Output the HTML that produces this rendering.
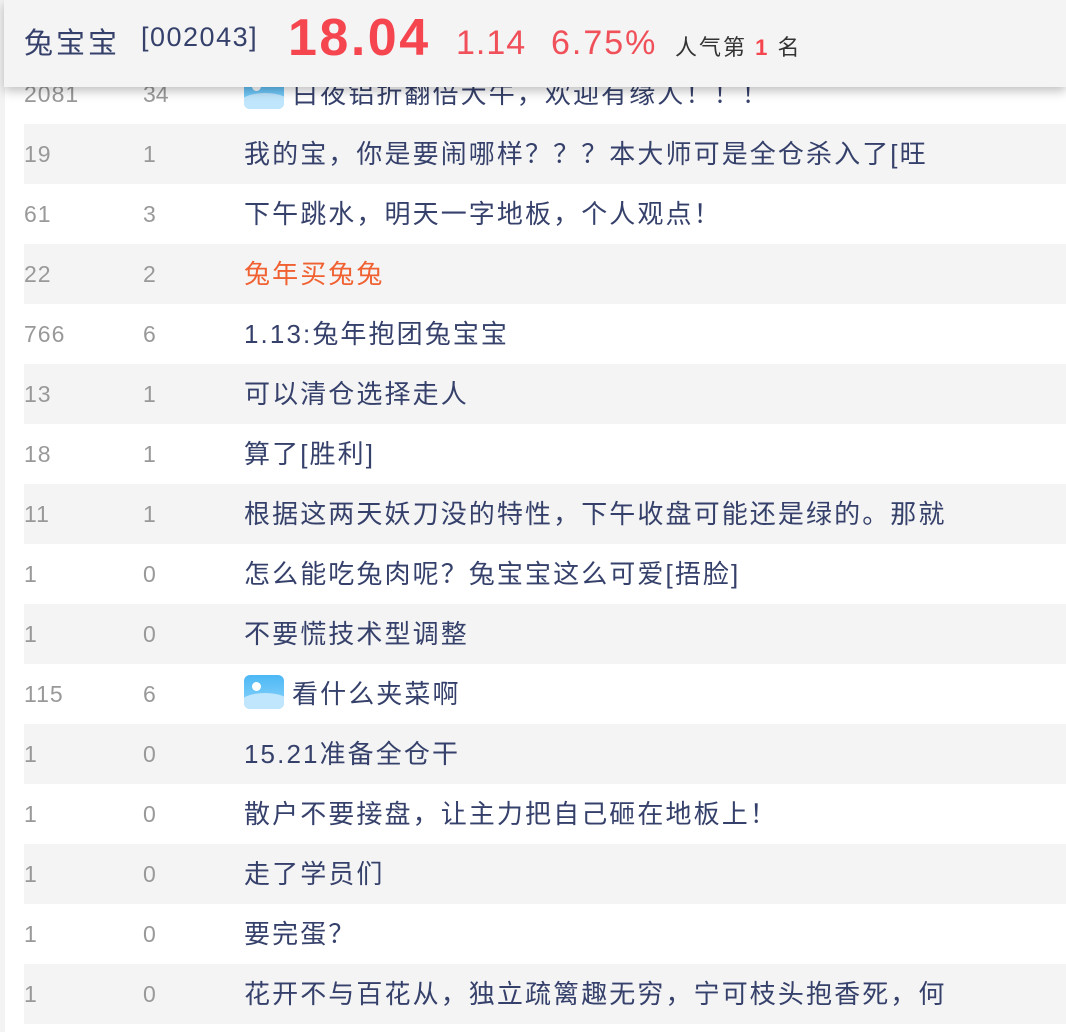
<!DOCTYPE html>
<html><head><meta charset="utf-8"><style>
*{margin:0;padding:0;box-sizing:border-box}
html,body{width:1066px;height:1032px;overflow:hidden;background:#fff}
body{position:relative;font-family:"Liberation Sans","Noto Sans CJK SC",sans-serif}
.edge{position:absolute;left:0;top:0;width:5px;height:1032px;background:#f3f3f3}
.list{position:absolute;left:24px;top:64px;right:0}
.row{height:60px;position:relative;background:#fff}
.row.g{background:#f4f4f4}
.row span{position:absolute;top:0;line-height:60px}
.a{left:0;font-size:23px;color:#999;letter-spacing:1px}
.b{left:119px;font-size:23px;color:#999}
.t{left:220px;font-size:26px;color:#36416b;white-space:nowrap;letter-spacing:2.1px}
.t.o{color:#f06030}
.ic{display:inline-block;width:40px;height:34px;border-radius:6px;vertical-align:-6px;margin-right:8px;overflow:hidden;position:relative;background:linear-gradient(#4cb8f5,#8fd4fb)}
.ic:before{content:"";position:absolute;left:8px;top:7px;width:9px;height:9px;border-radius:50%;background:#fff}
.ic:after{content:"";position:absolute;left:-6px;top:18px;width:54px;height:24px;border-radius:50% 50% 0 0;background:#bfe6fd}
.hdr{position:absolute;left:4px;top:0;right:0;height:87px;background:#f4f4f4;box-shadow:0 4px 10px rgba(0,0,0,.25);z-index:2}
.hdr span{position:absolute;white-space:nowrap}
</style></head><body>
<div class="edge"></div>
<div class="list">
<div class="row"><span class="a">2081</span><span class="b">34</span><span class="t"><i class="ic"></i>白夜铝折翻倍大牛，欢迎有缘人！！！</span></div>
<div class="row g"><span class="a">19</span><span class="b">1</span><span class="t">我的宝，你是要闹哪样？？？本大师可是全仓杀入了[旺</span></div>
<div class="row"><span class="a">61</span><span class="b">3</span><span class="t">下午跳水，明天一字地板，个人观点！</span></div>
<div class="row g"><span class="a">22</span><span class="b">2</span><span class="t o">兔年买兔兔</span></div>
<div class="row"><span class="a">766</span><span class="b">6</span><span class="t">1.13:兔年抱团兔宝宝</span></div>
<div class="row g"><span class="a">13</span><span class="b">1</span><span class="t">可以清仓选择走人</span></div>
<div class="row"><span class="a">18</span><span class="b">1</span><span class="t">算了[胜利]</span></div>
<div class="row g"><span class="a">11</span><span class="b">1</span><span class="t">根据这两天妖刀没的特性，下午收盘可能还是绿的。那就</span></div>
<div class="row"><span class="a">1</span><span class="b">0</span><span class="t">怎么能吃兔肉呢？兔宝宝这么可爱[捂脸]</span></div>
<div class="row g"><span class="a">1</span><span class="b">0</span><span class="t">不要慌技术型调整</span></div>
<div class="row"><span class="a">115</span><span class="b">6</span><span class="t"><i class="ic"></i>看什么夹菜啊</span></div>
<div class="row g"><span class="a">1</span><span class="b">0</span><span class="t">15.21准备全仓干</span></div>
<div class="row"><span class="a">1</span><span class="b">0</span><span class="t">散户不要接盘，让主力把自己砸在地板上！</span></div>
<div class="row g"><span class="a">1</span><span class="b">0</span><span class="t">走了学员们</span></div>
<div class="row"><span class="a">1</span><span class="b">0</span><span class="t">要完蛋？</span></div>
<div class="row g"><span class="a">1</span><span class="b">0</span><span class="t">花开不与百花从，独立疏篱趣无穷，宁可枝头抱香死，何</span></div>
</div>
<div class="hdr">
<span style="left:20px;top:20px;font-size:29px;color:#36416b;letter-spacing:3px">兔宝宝</span>
<span style="left:137px;top:22px;font-size:27px;color:#36416b;letter-spacing:1.5px">[002043]</span>
<span style="left:284px;top:8px;font-size:52px;font-weight:bold;color:#f5454f;letter-spacing:2.5px">18.04</span>
<span style="left:452px;top:24px;font-size:34px;color:#f0505a;letter-spacing:1px">1.14</span>
<span style="left:547px;top:24px;font-size:34px;color:#f0505a;letter-spacing:2px">6.75%</span>
<span style="left:671px;top:30px;font-size:22px;color:#333;letter-spacing:2px">人气第 <b style="color:#f5454f">1</b> 名</span>
</div>
</body></html>
